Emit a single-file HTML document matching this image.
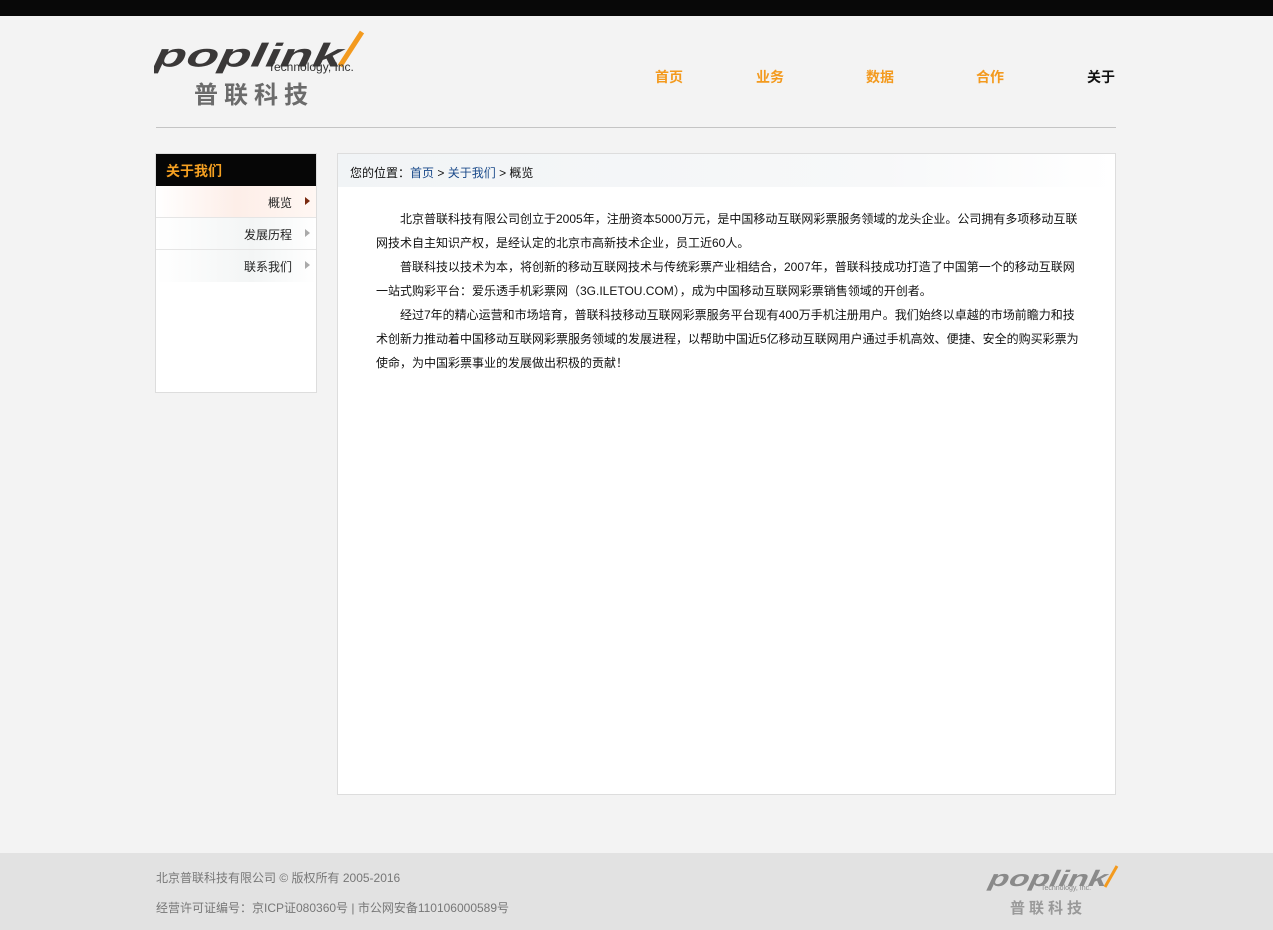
<!DOCTYPE html>
<html><head><meta charset="utf-8"><style>
*{margin:0;padding:0;box-sizing:border-box}
body{width:1273px;height:930px;background:#f3f3f3;font-family:"Liberation Sans","Noto Sans CJK SC",sans-serif;position:relative;overflow:hidden}
.top{position:absolute;left:0;top:0;width:1273px;height:16px;background:#080808}
.nav a{position:absolute;top:67px;font-size:14px;font-weight:bold;color:#f39a1e;text-decoration:none}
.hr{position:absolute;left:156px;top:127px;width:960px;height:1px;background:#c4c4c4}
.side{position:absolute;left:155px;top:153px;width:162px;height:240px;background:#fff;border:1px solid #ddd}
.side .h{height:32px;background:#060606;color:#f5a021;font-size:14px;font-weight:bold;padding:7px 0 0 10px}
.side .it{height:32px;border-bottom:1px solid #e5e5e5;font-size:12px;color:#222;text-align:right;padding:8px 24px 0 0;position:relative;background:linear-gradient(90deg,#fff,#f3f5f5 60%,#fff)}
.side .it.on{background:linear-gradient(90deg,#fff,#fdeee8 50%,#fff7f3)}
.side .it:after{content:"";position:absolute;right:6px;top:11px;border-left:5px solid #aaa;border-top:4px solid transparent;border-bottom:4px solid transparent}
.side .it.on:after{border-left-color:#7a2a10}
.main{position:absolute;left:337px;top:153px;width:779px;height:642px;background:#fff;border:1px solid #ddd}
.bc{height:33px;background:linear-gradient(90deg,#f1f4f6,#f7f8f9 70%,#fff);font-size:12px;color:#111;padding:10px 0 0 12px}
.bc a{color:#1a4a8a;text-decoration:none}
.txt{position:absolute;left:38px;top:53px;width:706px;font-size:12px;line-height:24px;color:#111}
.txt p{text-indent:24px}
.foot{position:absolute;left:0;top:853px;width:1273px;height:77px;background:#e2e2e2;color:#777;font-size:12px}
</style></head><body>
<div class="top"></div>
<svg style="position:absolute;left:154px;top:28px" width="212" height="82">
<g transform="skewX(-25)"><text x="14" y="40" font-family="Liberation Sans" font-size="44" font-weight="bold" fill="#3a3838" textLength="188" lengthAdjust="spacingAndGlyphs" transform="scale(1,0.75) translate(0,11)">poplink</text></g>
<path d="M186 38 L208 4" stroke="#f39a1e" stroke-width="5"/>
<text x="114" y="43" font-family="Liberation Sans" font-size="12" fill="#333">Technology, Inc.</text>
<text x="40" y="75" font-family="Noto Sans CJK SC" font-size="24" font-weight="bold" fill="#6b6b6b" letter-spacing="6">普联科技</text>
</svg>
<div class="nav"><a style="left:655px">首页</a><a style="left:756px">业务</a><a style="left:866px">数据</a><a style="left:976px">合作</a><a style="left:1087px;color:#111">关于</a></div>
<div class="hr"></div>
<div class="side"><div class="h">关于我们</div>
<div class="it on">概览</div><div class="it">发展历程</div><div class="it" style="border:0">联系我们</div></div>
<div class="main"><div class="bc">您的位置：<a>首页</a> &gt; <a>关于我们</a> &gt; 概览</div>
<div class="txt">
<p>北京普联科技有限公司创立于2005年，注册资本5000万元，是中国移动互联网彩票服务领域的龙头企业。公司拥有多项移动互联网技术自主知识产权，是经认定的北京市高新技术企业，员工近60人。</p>
<p>普联科技以技术为本，将创新的移动互联网技术与传统彩票产业相结合，2007年，普联科技成功打造了中国第一个的移动互联网一站式购彩平台：爱乐透手机彩票网（3G.ILETOU.COM），成为中国移动互联网彩票销售领域的开创者。</p>
<p>经过7年的精心运营和市场培育，普联科技移动互联网彩票服务平台现有400万手机注册用户。我们始终以卓越的市场前瞻力和技术创新力推动着中国移动互联网彩票服务领域的发展进程，以帮助中国近5亿移动互联网用户通过手机高效、便捷、安全的购买彩票为使命，为中国彩票事业的发展做出积极的贡献！</p>
</div></div>
<div class="foot">
<div style="position:absolute;left:156px;top:16px">北京普联科技有限公司 © 版权所有 2005-2016</div>
<div style="position:absolute;left:156px;top:46px">经营许可证编号：京ICP证080360号 | 市公网安备110106000589号</div>
<svg style="position:absolute;left:985px;top:10px" width="135" height="55">
<g transform="skewX(-25)"><text x="12" y="24" font-family="Liberation Sans" font-size="28" font-weight="bold" fill="#8a8a8a" textLength="118" lengthAdjust="spacingAndGlyphs" transform="scale(1,0.8) translate(0,5)">poplink</text></g>
<path d="M120 24 L132 3" stroke="#f39a1e" stroke-width="3"/>
<text x="56" y="27" font-family="Liberation Sans" font-size="7" fill="#888">Technology, Inc.</text>
<text x="25" y="50" font-family="Noto Sans CJK SC" font-size="15" font-weight="bold" fill="#999" letter-spacing="4">普联科技</text>
</svg></div>
</body></html>
